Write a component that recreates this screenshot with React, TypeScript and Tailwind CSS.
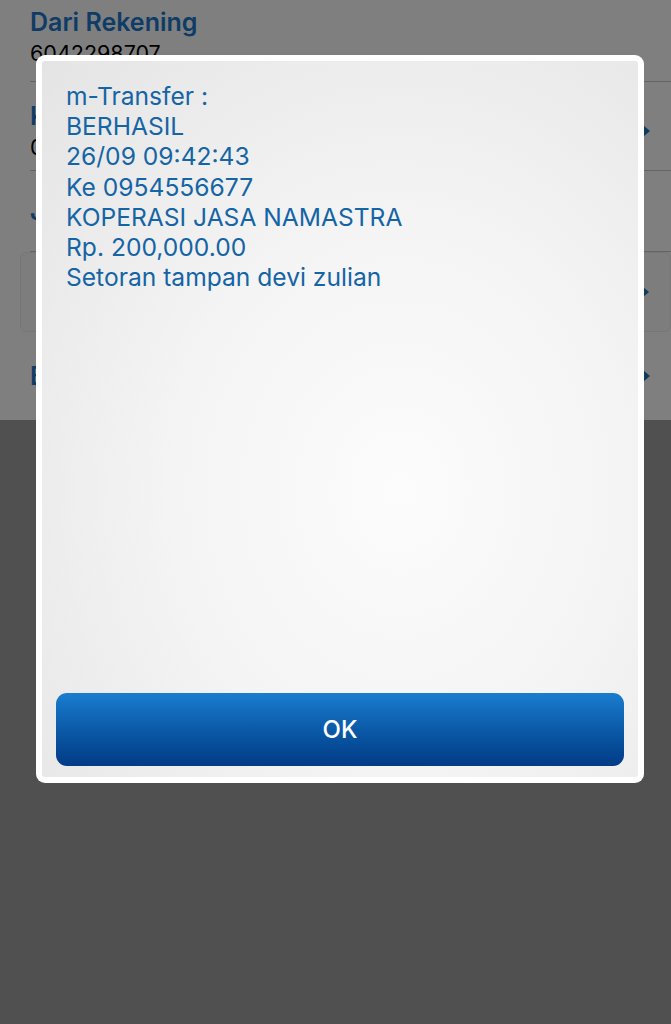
import React from "react";

const rows = [
  { label: "Ke Rekening", value: "0954556677", arrow: true },
  { label: "Jenis Transfer", value: "", arrow: false },
];

const message = [
  "m-Transfer :",
  "BERHASIL",
  "26/09 09:42:43",
  "Ke 0954556677",
  "KOPERASI JASA NAMASTRA",
  "Rp. 200,000.00",
  "Setoran tampan devi zulian",
];

const Arrow = () => (
  <svg width="10" height="16" viewBox="0 0 10 16" className="text-[#1c78c0]">
    <path d="M2 2 L9 8 L2 14 Z" fill="currentColor" />
  </svg>
);

export default function App() {
  return (
    <div
      className="relative w-[671px] h-[1024px] overflow-hidden bg-[#a0a0a0]"
      style={{ fontFamily: "Inter, Roboto, 'Liberation Sans', sans-serif" }}
    >
      {/* form behind the dialog */}
      <div className="bg-white h-[420px] pl-[30px]">
        <div className="h-[82px] pt-[6px] border-b border-[#c8c8c8]">
          <div className="text-[25px] leading-[32px] font-semibold text-[#1c78cc]">Dari Rekening</div>
          <div className="text-[21.5px] leading-[30px] text-black">6042298707</div>
        </div>
        <div className="h-[89px] pt-[10px] pr-[20px] flex items-center justify-between border-b border-[#c8c8c8]">
          <div>
            <div className="text-[25px] leading-[32px] font-semibold text-[#1c78cc]">{rows[0].label}</div>
            <div className="text-[21.5px] leading-[30px] text-black">{rows[0].value}</div>
          </div>
          <Arrow />
        </div>
        <div className="h-[81px] flex items-center border-b border-[#c8c8c8]">
          <div className="text-[25px] leading-[32px] font-semibold text-[#1c78cc]">{rows[1].label}</div>
        </div>
        <div className="h-[80px] -ml-[10px] pr-[20px] flex items-center justify-end border border-[#ececec] rounded-[6px] bg-[#fafafa]">
          <Arrow />
        </div>
        <div className="h-[88px] pr-[20px] flex items-center justify-between">
          <div className="text-[25px] leading-[32px] font-semibold text-[#1c78cc]">Berita</div>
          <Arrow />
        </div>
      </div>

      {/* dim overlay */}
      <div className="absolute inset-0 bg-black/50" />

      {/* dialog */}
      <div className="absolute left-[36px] top-[55px] w-[608px] h-[728px] bg-white rounded-[9px] p-[6px]">
        <div className="w-full h-full rounded-[3px] flex flex-col bg-[radial-gradient(ellipse_at_60%_60%,#fcfcfc_0%,#f4f4f4_45%,#e4e4e4_100%)]">
          <div className="flex-1 pt-[20px] pl-[24px]">
            {message.map((line) => (
              <div key={line} className="text-[24.6px] leading-[30.2px] text-[#1464a6]">
                {line}
              </div>
            ))}
          </div>
          <div className="px-[14px] pb-[11px]">
            <button className="w-full h-[73px] rounded-[11px] bg-gradient-to-b from-[#1a7dcf] via-[#0b5aa8] to-[#033b86] text-white text-[24px] font-medium">
              OK
            </button>
          </div>
        </div>
      </div>
    </div>
  );
}
